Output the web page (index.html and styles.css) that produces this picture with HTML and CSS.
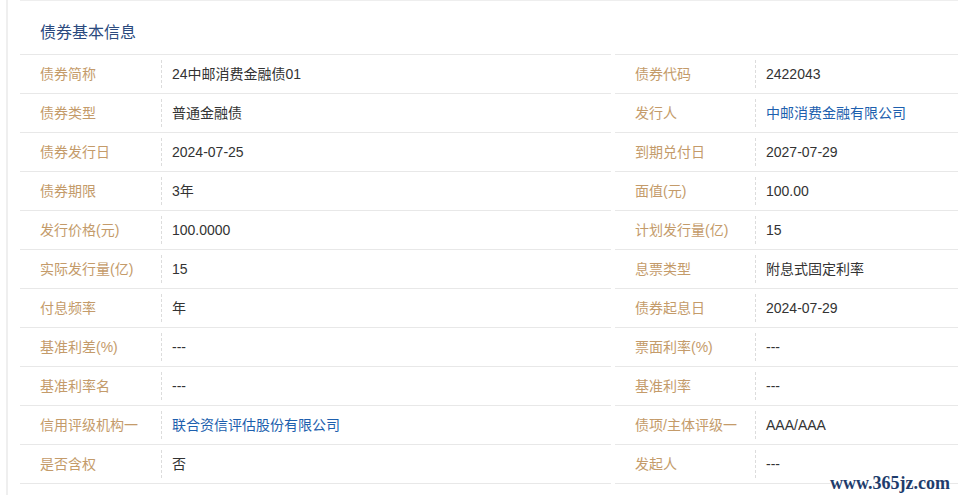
FILE: index.html
```html
<!DOCTYPE html>
<html lang="zh">
<head>
<meta charset="utf-8">
<title>债券基本信息</title>
<link rel="stylesheet" href="styles.css">
</head>
<body>
<div class="page">
  <div class="card">
    <div class="title">债券基本信息</div>
    <div class="grid">
      <div class="table left">
        <div class="row"><div class="label">债券简称</div><div class="value">24中邮消费金融债01</div></div>
        <div class="row"><div class="label">债券类型</div><div class="value">普通金融债</div></div>
        <div class="row"><div class="label">债券发行日</div><div class="value">2024-07-25</div></div>
        <div class="row"><div class="label">债券期限</div><div class="value">3年</div></div>
        <div class="row"><div class="label">发行价格(元)</div><div class="value">100.0000</div></div>
        <div class="row"><div class="label">实际发行量(亿)</div><div class="value">15</div></div>
        <div class="row"><div class="label">付息频率</div><div class="value">年</div></div>
        <div class="row"><div class="label">基准利差(%)</div><div class="value">---</div></div>
        <div class="row"><div class="label">基准利率名</div><div class="value">---</div></div>
        <div class="row"><div class="label">信用评级机构一</div><div class="value link">联合资信评估股份有限公司</div></div>
        <div class="row"><div class="label">是否含权</div><div class="value">否</div></div>
      </div>
      <div class="table right">
        <div class="row"><div class="label">债券代码</div><div class="value">2422043</div></div>
        <div class="row"><div class="label">发行人</div><div class="value link">中邮消费金融有限公司</div></div>
        <div class="row"><div class="label">到期兑付日</div><div class="value">2027-07-29</div></div>
        <div class="row"><div class="label">面值(元)</div><div class="value">100.00</div></div>
        <div class="row"><div class="label">计划发行量(亿)</div><div class="value">15</div></div>
        <div class="row"><div class="label">息票类型</div><div class="value">附息式固定利率</div></div>
        <div class="row"><div class="label">债券起息日</div><div class="value">2024-07-29</div></div>
        <div class="row"><div class="label">票面利率(%)</div><div class="value">---</div></div>
        <div class="row"><div class="label">基准利率</div><div class="value">---</div></div>
        <div class="row"><div class="label">债项/主体评级一</div><div class="value">AAA/AAA</div></div>
        <div class="row"><div class="label">发起人</div><div class="value">---</div></div>
      </div>
    </div>
  </div>
  <div class="watermark">www.365jz.com</div>
</div>
</body>
</html>
```

FILE: styles.css
```css
html, body {
  margin: 0;
  padding: 0;
  background: #ffffff;
}

body {
  font-family: "Liberation Sans", "Noto Sans CJK SC", sans-serif;
  font-size: 14px;
  color: #333333;
  overflow: hidden;
}

.page {
  position: relative;
  margin-left: 6px;
  border-left: 2px solid #efefef;
  height: 495px;
}

.card {
  margin-left: 12px;
  border-top: 1px solid #eeeeee;
}

.title {
  height: 53px;
  box-sizing: border-box;
  padding: 22px 0 0 20px;
  font-size: 16px;
  line-height: 20px;
  color: #2b4a7e;
}

.grid {
  display: grid;
  grid-template-columns: 591px 1fr;
  column-gap: 4px;
}

.table {
  border-top: 1px solid #e8e8e8;
}

.row {
  display: flex;
  align-items: center;
  height: 38px;
  border-bottom: 1px solid #e8e8e8;
}

.label {
  box-sizing: border-box;
  height: 28px;
  line-height: 28px;
  padding-left: 20px;
  border-right: 1px dashed #dcdcdc;
  color: #c49b6a;
  white-space: nowrap;
}

.left .label {
  width: 142px;
}

.right .label {
  width: 141px;
}

.value {
  padding-left: 10px;
  line-height: 28px;
  color: #333333;
  white-space: nowrap;
}

.value.link {
  color: #1d5fae;
}

.watermark {
  position: absolute;
  right: 8px;
  bottom: 2px;
  font-family: "Liberation Serif", serif;
  font-weight: bold;
  font-size: 18px;
  line-height: 20px;
  color: #1e3c6c;
  background: rgba(255, 255, 255, 0.6);
}
```
